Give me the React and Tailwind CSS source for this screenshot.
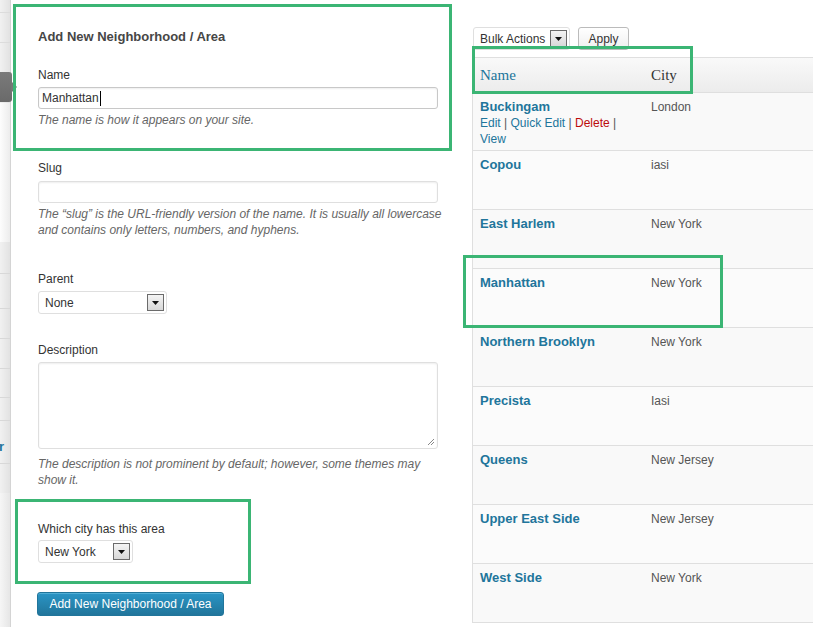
import React from 'react'

const SANS = "font-['Liberation_Sans',Arial,sans-serif]"

const ROWS = [
  { name: 'Buckingam', city: 'London', actions: true },
  { name: 'Copou', city: 'iasi' },
  { name: 'East Harlem', city: 'New York' },
  { name: 'Manhattan', city: 'New York' },
  { name: 'Northern Brooklyn', city: 'New York' },
  { name: 'Precista', city: 'Iasi' },
  { name: 'Queens', city: 'New Jersey' },
  { name: 'Upper East Side', city: 'New Jersey' },
  { name: 'West Side', city: 'New York' },
]

function DropArrow() {
  return (
    <span className="w-[17px] h-[17px] border border-[#6b6b6b] bg-gradient-to-b from-[#f4f4f4] to-[#d8d8d8] flex items-center justify-center">
      <svg width="7" height="4" viewBox="0 0 7 4">
        <path d="M0 0h7L3.5 4z" fill="#111" />
      </svg>
    </span>
  )
}

function Select({ value, className }) {
  return (
    <div className={`h-[23px] border border-[#dfdfdf] rounded-[3px] bg-white flex items-center justify-between pl-[6px] pr-[2px] text-[12px] text-[#333] ${className}`}>
      <span>{value}</span>
      <DropArrow />
    </div>
  )
}

function Help({ children, className = 'mt-[3px]' }) {
  return <p className={`${className} text-[12px] leading-[16px] italic text-[#666]`}>{children}</p>
}

function Label({ children }) {
  return <div className="text-[12px] leading-[16px] text-[#333]">{children}</div>
}

function Sidebar() {
  const rows = [273, 308, 338, 368, 397, 420, 463, 493]
  return (
    <div className="relative w-[11px] h-full shrink-0 bg-gradient-to-r from-[#f1f1f1] to-[#e2e2e2] border-r border-[#d4d4d4]">
      <div className="absolute left-0 right-0 top-[12px] h-px bg-[#dcdcdc]" />
      <div className="absolute left-0 right-0 top-[42px] h-px bg-[#dcdcdc]" />
      <div className="absolute left-0 right-0 top-[103px] h-[139px] bg-gradient-to-r from-[#fdfdfd] to-[#ececec]" />
      {rows.map((y) => (
        <div key={y} className="absolute left-0 right-0 h-px bg-[#d8d8d8]" style={{ top: y }} />
      ))}
      <div className="absolute left-0 right-0 top-[493px] bottom-0 bg-gradient-to-r from-[#f6f6f6] to-[#e6e6e6]" />
      <div className="absolute left-0 top-[72px] w-[12px] h-[30px] rounded-r-[3px] bg-gradient-to-b from-[#7a7a7a] to-[#6a6a6a]" />
      <svg className="absolute left-[11px] top-[81px]" width="7" height="12" viewBox="0 0 7 12">
        <path d="M0 0l6 6-6 6z" fill="#777" />
      </svg>
      <span className="absolute left-[-1px] top-[439px] text-[13px] leading-[16px] font-bold text-[#21759b]">r</span>
    </div>
  )
}

function FormPanel() {
  return (
    <div className="w-[449px] shrink-0 pl-[27px] pr-[12px] pt-[29px]">
      <h3 className="text-[13px] leading-[16px] font-bold text-[#464646]">Add New Neighborhood / Area</h3>

      <div className="mt-[22px]">
        <Label>Name</Label>
        <div className="mt-[4px] w-[400px] h-[22px] border border-[#c8c8c8] rounded-[3px] shadow-[inset_0_1px_2px_rgba(0,0,0,0.07)] flex items-center px-[3px] text-[12px] text-[#333]">
          Manhattan<span className="inline-block w-px h-[15px] bg-black ml-px" />
        </div>
        <Help>The name is how it appears on your site.</Help>
      </div>

      <div className="mt-[32px]">
        <Label>Slug</Label>
        <div className="mt-[5px] w-[400px] h-[22px] border border-[#dfdfdf] rounded-[3px] shadow-[inset_0_1px_2px_rgba(0,0,0,0.07)]" />
        <Help>
          The “slug” is the URL-friendly version of the name. It is usually all lowercase and contains only letters, numbers, and hyphens.
        </Help>
      </div>

      <div className="mt-[33px]">
        <Label>Parent</Label>
        <Select value="None" className="mt-[4px] w-[129px]" />
      </div>

      <div className="mt-[28px]">
        <Label>Description</Label>
        <div className="relative mt-[4px] w-[400px] h-[87px] border border-[#dfdfdf] rounded-[3px] shadow-[inset_0_1px_2px_rgba(0,0,0,0.07)]">
          <svg className="absolute right-[2px] bottom-[2px]" width="8" height="8" viewBox="0 0 8 8">
            <path d="M7 1L1 7M7 4L4 7" stroke="#888" strokeWidth="1" />
          </svg>
        </div>
        <Help className="mt-[7px]">The description is not prominent by default; however, some themes may show it.</Help>
      </div>

      <div className="mt-[33px]">
        <Label>Which city has this area</Label>
        <Select value="New York" className="mt-[3px] w-[95px]" />
      </div>

      <button className="mt-[29px] -ml-px w-[187px] h-[24px] rounded-[3px] border border-[#21759b] bg-gradient-to-b from-[#2a95c5] to-[#21759b] text-white text-[12px] shadow-[inset_0_1px_0_rgba(120,200,230,0.5)]">
        Add New Neighborhood / Area
      </button>
    </div>
  )
}

function TablePanel() {
  return (
    <div className="flex-1 ml-[12px] pt-[27px]">
      <div className="flex items-center gap-[8px] ml-[1px]">
        <Select value="Bulk Actions" className="w-[97px] h-[22px] pl-[6px]" />
        <button className="w-[51px] h-[23px] border border-[#bbb] rounded-[3px] bg-gradient-to-b from-white to-[#efefef] text-[12px] text-[#333]">
          Apply
        </button>
      </div>

      <div className="mt-[7px] border-l border-t border-[#dfdfdf]">
        <div className="grid grid-cols-[171px_1fr] h-[35px] items-center bg-gradient-to-b from-[#f9f9f9] to-[#ececec] border-b border-[#dfdfdf] font-['Liberation_Serif',Georgia,serif] text-[15px]">
          <span className="pl-[7px] text-[#21759b]">Name</span>
          <span className="pl-[7px] text-[#333]">City</span>
        </div>
        {ROWS.map((r, i) => (
          <div
            key={r.name}
            className={`grid grid-cols-[171px_1fr] ${i === 0 ? 'h-[58px]' : 'h-[59px]'} border-b border-[#dfdfdf] pt-[6px] ${i % 2 === 0 ? 'bg-[#f9f9f9]' : 'bg-[#fbfbfb]'}`}
          >
            <div className="pl-[7px]">
              <div className="text-[13px] leading-[16px] font-bold text-[#21759b]">{r.name}</div>
              {r.actions && (
                <div className="text-[12px] leading-[16px] text-[#555] pr-[8px]">
                  <span className="text-[#21759b]">Edit</span> | <span className="text-[#21759b]">Quick Edit</span> |{' '}
                  <span className="text-[#bc0b0b]">Delete</span> | <span className="text-[#21759b]">View</span>
                </div>
              )}
            </div>
            <div className="pl-[7px] text-[12px] leading-[16px] text-[#555]">{r.city}</div>
          </div>
        ))}
      </div>
    </div>
  )
}

function Marker({ className }) {
  return <div className={`absolute border-[3px] border-[#3bb574] pointer-events-none ${className}`} />
}

export default function App() {
  return (
    <div className={`relative w-[813px] h-[627px] overflow-hidden bg-white flex ${SANS}`}>
      <Sidebar />
      <FormPanel />
      <TablePanel />

      <Marker className="left-[13px] top-[4px] w-[439px] h-[147px]" />
      <Marker className="left-[15px] top-[499px] w-[236px] h-[85px]" />
      <Marker className="left-[472px] top-[46px] w-[221px] h-[48px]" />
      <Marker className="left-[463px] top-[255px] w-[260px] h-[73px]" />
    </div>
  )
}
